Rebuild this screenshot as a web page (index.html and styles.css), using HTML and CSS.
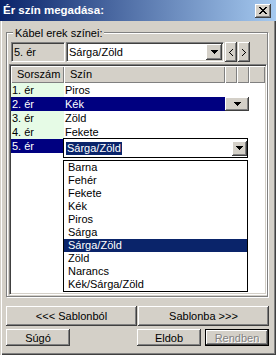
FILE: index.html
```html
<!DOCTYPE html>
<html lang="hu">
<head>
  <meta charset="UTF-8">
  <title>Ér szín megadása</title>
  <link rel="stylesheet" href="styles.css">
</head>
<body>
  <div class="window">
    <div class="titlebar">
      <span class="title">Ér szín megadása:</span>
      <button class="close">
        <svg width="8" height="7" viewBox="0 0 8 7" shape-rendering="crispEdges"><path d="M0 0h2v1H0zM6 0h2v1H6zM1 1h2v1H1zM5 1h2v1H5zM2 2h4v1H2zM3 3h2v1H3zM2 4h4v1H2zM1 5h2v1H1zM5 5h2v1H5zM0 6h2v1H0zM6 6h2v1H6z"/></svg>
      </button>
    </div>

    <div class="client">
      <div class="group">
        <div class="caption">Kábel erek színei:</div>

        <div class="picker">
          <div class="field">5. ér</div>
          <div class="combo">
            <span class="value">Sárga/Zöld</span>
            <span class="drop"><svg width="7" height="4" viewBox="0 0 7 4" shape-rendering="crispEdges"><path d="M0 0h7v1H0zM1 1h5v1H1zM2 2h3v1H2zM3 3h1v1H3z"/></svg></span>
          </div>
          <button class="nav"><svg width="4" height="7" viewBox="0 0 4 7" shape-rendering="crispEdges"><path d="M3 0h1v1H3zM2 1h1v1H2zM1 2h1v1H1zM0 3h1v1H0zM1 4h1v1H1zM2 5h1v1H2zM3 6h1v1H3z"/></svg></button>
          <button class="nav"><svg width="4" height="7" viewBox="0 0 4 7" shape-rendering="crispEdges"><path d="M0 0h1v1H0zM1 1h1v1H1zM2 2h1v1H2zM3 3h1v1H3zM2 4h1v1H2zM1 5h1v1H1zM0 6h1v1H0z"/></svg></button>
        </div>

        <div class="grid">
          <div class="head">
            <div class="hcell num-col">Sorszám</div>
            <div class="hcell color-col">Szín</div>
            <div class="hcell narrow"></div>
            <div class="hcell narrow"></div>
            <div class="hcell fill"></div>
          </div>
          <div class="row">
            <div class="num">1. ér</div>
            <div class="color">Piros</div>
          </div>
          <div class="row selected">
            <div class="num">2. ér</div>
            <div class="color">Kék</div>
            <span class="drop cell-drop"><svg width="7" height="4" viewBox="0 0 7 4" shape-rendering="crispEdges"><path d="M0 0h7v1H0zM1 1h5v1H1zM2 2h3v1H2zM3 3h1v1H3z"/></svg></span>
          </div>
          <div class="row">
            <div class="num">3. ér</div>
            <div class="color">Zöld</div>
          </div>
          <div class="row">
            <div class="num">4. ér</div>
            <div class="color">Fekete</div>
          </div>
          <div class="row">
            <div class="num active">5. ér</div>
            <div class="color"></div>
          </div>

          <div class="popup">
            <div class="popup-combo">
              <span class="popup-value">Sárga/Zöld</span>
              <span class="drop popup-drop"><svg width="7" height="4" viewBox="0 0 7 4" shape-rendering="crispEdges"><path d="M0 0h7v1H0zM1 1h5v1H1zM2 2h3v1H2zM3 3h1v1H3z"/></svg></span>
            </div>
            <ul class="list">
              <li>Barna</li>
              <li>Fehér</li>
              <li>Fekete</li>
              <li>Kék</li>
              <li>Piros</li>
              <li>Sárga</li>
              <li class="current">Sárga/Zöld</li>
              <li>Zöld</li>
              <li>Narancs</li>
              <li>Kék/Sárga/Zöld</li>
            </ul>
          </div>
        </div>
      </div>

      <div class="actions">
        <button class="btn wide">&lt;&lt;&lt; Sablonból</button>
        <button class="btn wide">Sablonba &gt;&gt;&gt;</button>
      </div>

      <div class="footer">
        <button class="btn small">Súgó</button>
        <button class="btn small push">Eldob</button>
        <button class="btn small default" disabled>Rendben</button>
      </div>
    </div>
  </div>
</body>
</html>
```

FILE: styles.css
```css
* {
  box-sizing: border-box;
  font-family: 'Liberation Sans', Arial, sans-serif;
}

body {
  margin: 0;
  background: #d4d0c8;
  font-size: 11px;
  line-height: 13px;
  color: #000;
}

button {
  margin: 0;
  padding: 0;
  border: none;
  background: #d4d0c8;
  font-size: 11px;
  color: #000;
}

.window {
  width: 276px;
  height: 355px;
  display: flex;
  flex-direction: column;
  background: #d4d0c8;
  box-shadow: inset 1px 1px #d4d0c8, inset 2px 2px #fff, inset -1px -1px #404040, inset -2px -2px #808080;
}

/* title bar */
.titlebar {
  height: 21px;
  display: flex;
  align-items: center;
  justify-content: space-between;
  padding: 0 5px 0 3px;
  background: linear-gradient(to right, #0a246a, #a6caf0);
}

.title {
  color: #fff;
  font-weight: bold;
  font-size: 11.5px;
}

.close {
  width: 16px;
  height: 14px;
  display: flex;
  align-items: center;
  justify-content: center;
}

.close,
.nav,
.drop,
.btn,
.hcell {
  box-shadow: inset -1px -1px #404040, inset 1px 1px #fff, inset -2px -2px #808080, inset 2px 2px #d4d0c8;
}

.client {
  flex: 1;
  display: flex;
  flex-direction: column;
  padding: 11px 8px 0 6px;
}

/* group box */
.group {
  display: flex;
  flex-direction: column;
  border: 1px solid #808080;
  box-shadow: 1px 1px #fff, inset 1px 1px #fff;
  padding: 0 0 1px 2px;
}

.caption {
  align-self: flex-start;
  margin: -6px 0 0 4px;
  padding: 0 2px;
  background: #d4d0c8;
}

.picker {
  display: flex;
  gap: 1px;
  height: 20px;
  margin: 2px 0 0 2px;
}

.field,
.combo,
.grid {
  border: 1px solid;
  border-color: #808080 #fff #fff #808080;
  box-shadow: inset 1px 1px #404040, inset -1px -1px #d4d0c8;
  padding: 1px;
}

.field {
  width: 54px;
  display: flex;
  align-items: center;
  padding-left: 2px;
}

.combo {
  width: 158px;
  display: flex;
  align-items: center;
  background: #fff;
}

.value {
  padding-left: 1px;
}

.drop {
  display: flex;
  align-items: center;
  justify-content: center;
  background: #d4d0c8;
}

.combo .drop {
  width: 16px;
  height: 16px;
  margin-left: auto;
}

.nav {
  width: 12px;
  display: flex;
  align-items: center;
  justify-content: center;
}

/* grid */
.grid {
  position: relative;
  height: 231px;
  margin-top: 2px;
  background: #fff;
  overflow: hidden;
}

.head {
  display: flex;
  height: 17px;
}

.hcell {
  line-height: 17px;
  padding-left: 6px;
  background: #d4d0c8;
  box-shadow: inset 1px 1px #fff, inset -1px -1px #808080;
}

.num-col { width: 53px; }
.color-col { width: 161px; }
.narrow { width: 12px; }
.fill { flex: 1; }

.row {
  display: flex;
  height: 14px;
  line-height: 14px;
}

.num {
  width: 53px;
  padding-left: 1px;
  background: #e6fbe6;
}

.color {
  width: 161px;
  padding-left: 1px;
}

.row.selected .num,
.row.selected .color,
.num.active {
  background: #000080;
  color: #fff;
}

.cell-drop {
  width: 24px;
  height: 14px;
}

/* open dropdown */
.popup {
  position: absolute;
  left: 53px;
  top: 73px;
  width: 185px;
}

.popup-combo {
  height: 20px;
  display: flex;
  align-items: center;
  padding-left: 2px;
  border: 1px solid #000;
  background: #fff;
}

.popup-value {
  padding: 0 1px;
  background: #0a246a;
  color: #fff;
}

.popup-drop {
  width: 15px;
  height: 15px;
  margin-left: auto;
}

.list {
  height: 132px;
  margin: 2px 0 0;
  padding: 0;
  list-style: none;
  border: 1px solid #000;
  background: #fff;
}

.list li {
  height: 13px;
  line-height: 13px;
  padding-left: 4px;
}

.list li.current {
  background: #0a246a;
  color: #fff;
}

/* buttons */
.actions {
  display: flex;
  gap: 1px;
  width: 263px;
  margin-top: 9px;
}

.wide {
  width: 131px;
  height: 20px;
}

.footer {
  display: flex;
  width: 263px;
  margin-top: 3px;
}

.small {
  width: 64px;
  height: 17px;
}

.push {
  margin-left: auto;
}

.default {
  margin-left: 4px;
  border: 1px solid #000;
}

.btn:disabled {
  color: #808080;
  text-shadow: 1px 1px 0 #fff;
}
```
